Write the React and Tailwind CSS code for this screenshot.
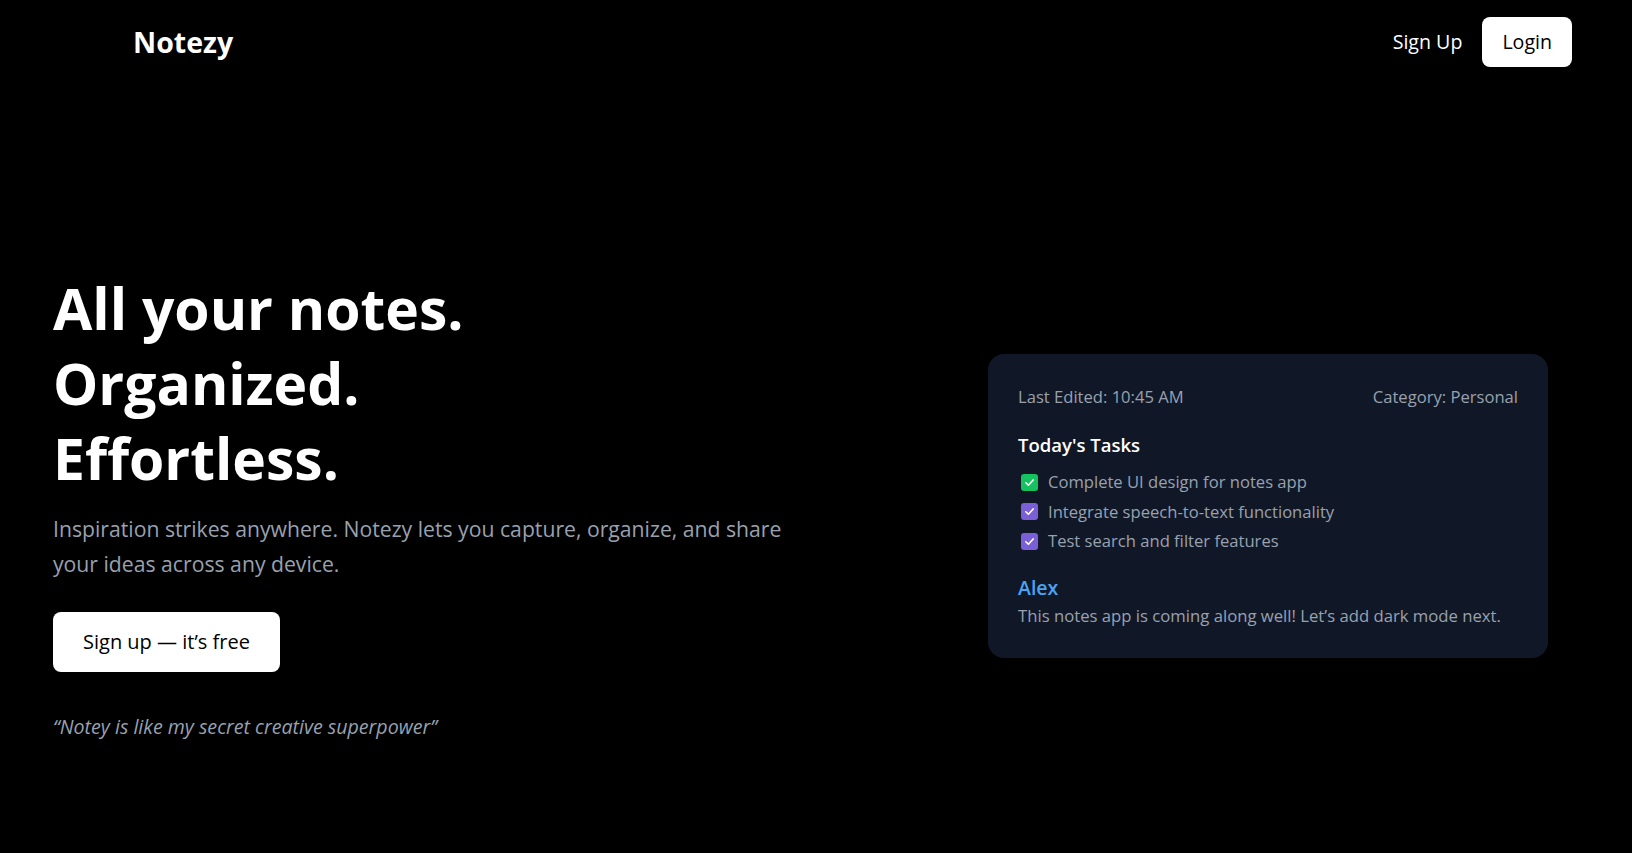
import React from "react";

function CheckBox({ color }) {
  return (
    <span className={`inline-flex items-center justify-center w-[17px] h-[17px] rounded-[3px] ${color} shrink-0`}>
      <svg width="11" height="11" viewBox="0 0 12 12" fill="none">
        <path d="M2 6.3 L4.8 9 L10 3.2" stroke="white" strokeWidth="1.8" strokeLinecap="round" strokeLinejoin="round" />
      </svg>
    </span>
  );
}

export default function App() {
  return (
    <div className="min-h-[853px] bg-black text-white font-['Open_Sans',sans-serif]">
      <nav className="flex items-center justify-between pl-[133px] pr-[60px] pt-[17px]">
        <div className="text-[28.5px] font-bold leading-none">Notezy</div>
        <div className="flex items-center gap-[20px]">
          <a className="text-[19.6px] text-white">Sign Up</a>
          <button className="bg-white text-black text-[19.6px] px-5 h-[50px] rounded-lg">Login</button>
        </div>
      </nav>

      <main className="flex items-center justify-between pl-[53px] pr-[84px] pt-[204px]">
        <div className="flex flex-col">
          <h1 className="text-[57px] font-bold leading-[75px]">
            All your notes.
            <br />
            Organized.
            <br />
            Effortless.
          </h1>
          <p className="mt-[16px] w-[745px] text-[21.2px] leading-[34.5px] text-gray-400">
            Inspiration strikes anywhere. Notezy lets you capture, organize, and share your ideas across any device.
          </p>
          <div className="mt-[31px]">
            <button className="bg-white text-black text-[20px] h-[60px] px-[30px] rounded-lg">
              Sign up — it’s free
            </button>
          </div>
          <p className="mt-[41px] text-[19.6px] leading-7 italic text-gray-400">
            “Notey is like my secret creative superpower”
          </p>
        </div>

        <div className="w-[560px] bg-gray-900 rounded-2xl px-[30px] pt-[31px] pb-[30px]">
          <div className="flex justify-between text-[16.6px] text-gray-400 leading-6">
            <span>Last Edited: 10:45 AM</span>
            <span>Category: Personal</span>
          </div>
          <div className="mt-[22px] text-[18.5px] font-semibold leading-7">Today's Tasks</div>
          <ul className="mt-[11px] flex flex-col gap-[5.5px] text-[16.6px] text-gray-400 leading-6">
            <li className="flex items-center gap-[10px] pl-[3px]"><CheckBox color="bg-[#16c15f]" />Complete UI design for notes app</li>
            <li className="flex items-center gap-[10px] pl-[3px]"><CheckBox color="bg-[#7b5fd6]" />Integrate speech-to-text functionality</li>
            <li className="flex items-center gap-[10px] pl-[3px]"><CheckBox color="bg-[#7b5fd6]" />Test search and filter features</li>
          </ul>
          <div className="mt-[21px] text-[19.5px] font-semibold text-[#4aa3f5] leading-7">Alex</div>
          <div className="mt-[2px] text-[16.7px] text-gray-400 leading-6">This notes app is coming along well! Let’s add dark mode next.</div>
        </div>
      </main>
    </div>
  );
}
